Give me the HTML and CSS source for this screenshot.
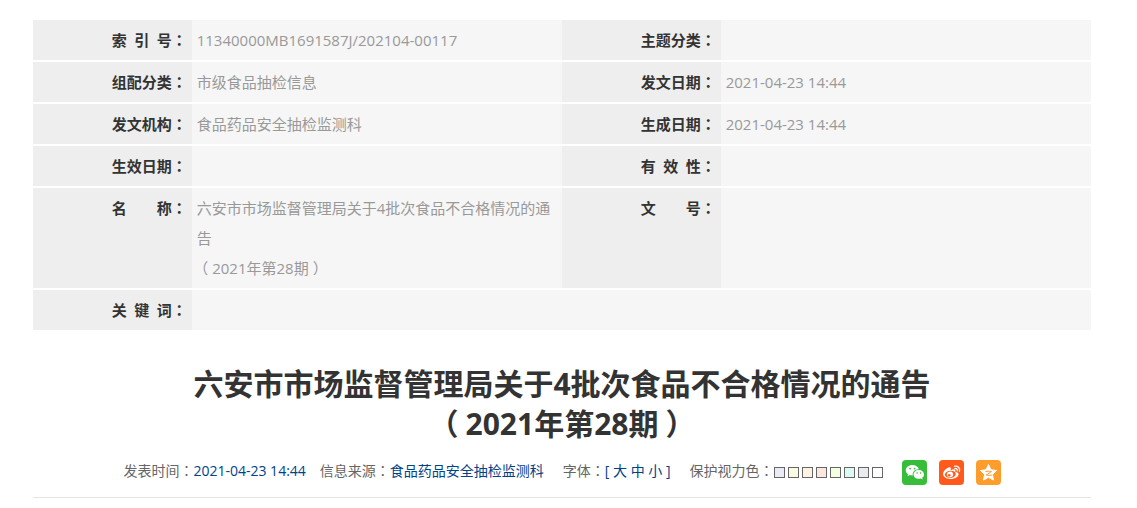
FILE: index.html
```html
<!DOCTYPE html>
<html lang="zh-CN">
<head>
  <meta charset="UTF-8" />
  <meta name="viewport" content="width=device-width, initial-scale=1.0"/>
  <title>六安市市场监督管理局关于4批次食品不合格情况的通告</title>
  <link rel="stylesheet" href="styles.css">
</head>
<body>

  <div class="container">
    <table class="info">
      <colgroup>
        <col class="col-label"><col class="col-value">
        <col class="col-label"><col class="col-value">
      </colgroup>
      <tbody>
        <tr>
          <th scope="row"><span class="name">索 引 号</span><span class="colon">：</span></th>
          <td>11340000MB1691587J/202104-00117</td>
          <th scope="row"><span class="name">主题分类</span><span class="colon">：</span></th>
          <td></td>
        </tr>
        <tr>
          <th scope="row"><span class="name">组配分类</span><span class="colon">：</span></th>
          <td>市级食品抽检信息</td>
          <th scope="row"><span class="name">发文日期</span><span class="colon">：</span></th>
          <td>2021-04-23 14:44</td>
        </tr>
        <tr>
          <th scope="row"><span class="name">发文机构</span><span class="colon">：</span></th>
          <td>食品药品安全抽检监测科</td>
          <th scope="row"><span class="name">生成日期</span><span class="colon">：</span></th>
          <td>2021-04-23 14:44</td>
        </tr>
        <tr>
          <th scope="row"><span class="name">生效日期</span><span class="colon">：</span></th>
          <td></td>
          <th scope="row"><span class="name">有 效 性</span><span class="colon">：</span></th>
          <td></td>
        </tr>
        <tr>
          <th scope="row"><span class="name">名 称</span><span class="colon">：</span></th>
          <td>六安市市场监督管理局关于4批次食品不合格情况的通告<br><span class="paren">（</span>2021年第28期<span class="paren">）</span></td>
          <th scope="row"><span class="name">文 号</span><span class="colon">：</span></th>
          <td></td>
        </tr>
        <tr>
          <th scope="row"><span class="name">关 键 词</span><span class="colon">：</span></th>
          <td colspan="3"></td>
        </tr>
      </tbody>
    </table>

    <h1>六安市市场监督管理局关于4批次食品不合格情况的通告<br><span class="paren">（</span>2021年第28期<span class="paren">）</span></h1>

    <div class="meta">
      <div class="origin">
        <span>发表时间<span class="colon" lang="zh-TW">：</span><b>2021-04-23 14:44</b></span>
        <span>信息来源<span class="colon" lang="zh-TW">：</span><b>食品药品安全抽检监测科</b></span>
      </div>
      <div class="fontsize">字体<span class="colon" lang="zh-TW">：</span><b>[ <a href="#">大</a> <a href="#">中</a> <a href="#">小</a> ]</b></div>
      <div class="eyecare">
        <span>保护视力色<span class="colon" lang="zh-TW">：</span></span>
        <div class="swatches">
          <button class="c1" aria-label="浅蓝"></button>
          <button class="c2" aria-label="浅黄"></button>
          <button class="c3" aria-label="杏色"></button>
          <button class="c4" aria-label="浅红"></button>
          <button class="c5" aria-label="浅绿"></button>
          <button class="c6" aria-label="浅青"></button>
          <button class="c7" aria-label="浅灰"></button>
          <button class="c8" aria-label="白色"></button>
        </div>
      </div>
      <div class="share">
        <a class="wechat" href="#" aria-label="微信">
          <svg viewBox="0 0 25 25">
            <path fill="#fff" d="M10.300 5C6.600 5 3.800 7.300 3.800 10.200c0 1.700.9 3.100 2.300 4.100l-.6 2 2.400-1.200c.8.200 1.600.3 2.400.3h.5c-.7-3.500 2.300-6.300 6.100-6.200C16.300 6.700 13.600 5 10.300 5z"/>
            <path fill="#fff" d="M22 14.400c0-2.500-2.400-4.400-5.200-4.400s-5.200 1.900-5.200 4.400 2.300 4.400 5.200 4.400c.6 0 1.200-.1 1.800-.3l2 1.100-.5-1.800c1.200-.8 1.900-2 1.900-3.400z"/>
            <g fill="#36bd3a"><circle cx="8.100" cy="8.600" r=".9"/><circle cx="12.500" cy="8.600" r=".9"/><circle cx="15.100" cy="13" r=".8"/><circle cx="18.600" cy="13" r=".8"/></g>
          </svg>
        </a>
        <a class="weibo" href="#" aria-label="微博">
          <svg viewBox="0 0 25 25">
            <path fill="#fff" d="M16.700 12.100c-.3-.1-.5-.2-.4-.5.9-2.400-1-3-4.200-1.700-.5.2-.5 0-.4-.4.7-2.200-.9-2.900-3.700-1.300C5.600 9.600 4 12 4 14.100c0 3 3.600 4.900 7.400 4.900 4.900 0 8.200-2.700 8.200-4.800 0-1.200-1.200-1.800-2.900-2.100z"/>
            <ellipse cx="11.300" cy="14.300" rx="5.500" ry="3.600" fill="#ff5a1b" transform="rotate(-6 11.300 14.300)"/>
            <ellipse cx="11" cy="14.500" rx="3.200" ry="2.800" fill="#fff" transform="rotate(-15 11 14.500)"/>
            <circle cx="10.200" cy="15.200" r="1.300" fill="#ff5a1b"/>
            <g fill="none" stroke="#fff" stroke-width="1.300" stroke-linecap="round"><path d="M15.500 6.200c3.300-.8 5.900 2 4.900 5.100"/><path d="M16 8.500c1.600-.3 2.700.9 2.300 2.300"/></g>
          </svg>
        </a>
        <a class="qzone" href="#" aria-label="QQ空间">
          <svg viewBox="0 0 25 25">
            <path fill="#fff" stroke="#fff" stroke-linejoin="round" d="M12.500 4.500l2.400 5.300 5.700.7-4.200 3.900 1.100 5.700-5-2.800-5 2.800 1.100-5.700-4.200-3.900 5.700-.7z"/>
            <path fill="none" stroke="#ff9d2c" d="M9.500 11.500c2-.4 4-.4 6 0L10.200 15c2 .4 3.800.5 6 .1"/>
          </svg>
        </a>
      </div>
    </div>
  </div>

</body>
</html>
```
FILE: styles.css
```css
body {
  margin: 0;
  font-family: "Open Sans", "Noto Sans CJK SC", sans-serif;
  font-size: 15px;
  color: #333;
  background-color: #fff;
}

.container {
  padding: 20px 46px 0 33px;
}

/* centred full-width punctuation */
.colon {
  font-family: "Noto Sans CJK TC", sans-serif;
}

.paren {
  padding: 0 4px;
  font-feature-settings: "halt";
}

h1 .paren {
  padding: 0 7px;
}

.info {
  width: 100%;
  table-layout: fixed;
  border-collapse: collapse;
}

.col-label {
  width: 15%;
}

.col-value {
  width: 35%;
}

.info tr + tr {
  border-top: 2px solid #fff;
}

.info th,
.info td {
  height: 30px;
  padding: 5px;
  line-height: 30px;
  vertical-align: top;
}

.info th {
  text-align: right;
  background-color: #eee;
}

.info td {
  padding-right: 10px;
  color: #999;
  background-color: #f6f6f6;
}

.name {
  display: inline-block;
  width: 4em;
  text-align: justify;
  text-align-last: justify;
}

h1 {
  margin: 34px 0 0;
  font-size: 30px;
  line-height: 40px;
  text-align: center;
}

.meta {
  display: flex;
  justify-content: center;
  align-items: flex-start;
  gap: 19px;
  margin-top: 16px;
  padding-bottom: 12px;
  border-bottom: 1px solid #e5e5e5;
  font-size: 14px;
  line-height: 20px;
  color: #666;
  white-space: nowrap;
}

.meta b,
.meta b a {
  font-weight: normal;
  color: #004288;
  text-decoration: none;
}

.origin {
  display: flex;
  gap: 14px;
}

.eyecare,
.swatches {
  display: flex;
  align-items: center;
}

.swatches {
  gap: 3px;
  padding-top: 3px;
}

.swatches button {
  width: 11px;
  height: 11px;
  padding: 0;
  border: 1px solid #666;
  cursor: pointer;
}

.c1 { background-color: #e9ecf5; }
.c2 { background-color: #f9fbe2; }
.c3 { background-color: #fff2e2; }
.c4 { background-color: #fde6e0; }
.c5 { background-color: #f3ffe1; }
.c6 { background-color: #dafaf3; }
.c7 { background-color: #eaeaef; }
.c8 { background-color: #fff; }

.share {
  display: flex;
  gap: 12px;
}

.share a {
  width: 25px;
  height: 25px;
  border-radius: 4px;
}

.share svg {
  display: block;
}

.wechat { background-color: #36bd3a; }
.weibo { background-color: #ff5a1b; }
.qzone { background-color: #ff9d2c; }
```
